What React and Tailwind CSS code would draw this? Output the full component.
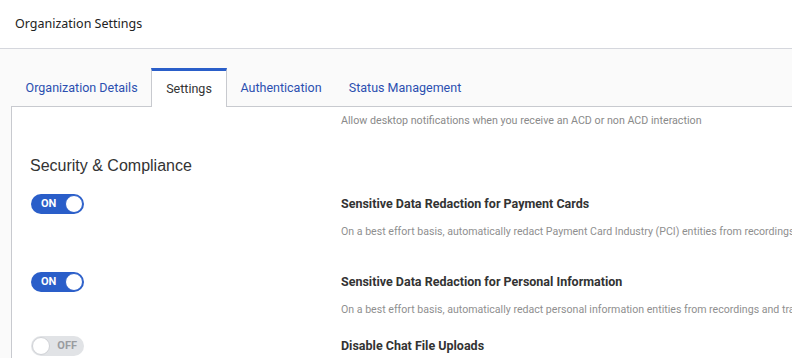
import React from 'react'

const tabs = [
  { name: 'Organization Details', active: false },
  { name: 'Settings', active: true },
  { name: 'Authentication', active: false },
  { name: 'Status Management', active: false },
]

function Toggle({ on }) {
  if (on) {
    return (
      <div className="flex h-[20px] w-[53px] items-center justify-between rounded-full bg-[#2a5ec9] pl-[10px] pr-[1px]">
        <span className="text-[11px] font-bold text-white">ON</span>
        <span className="h-[18px] w-[18px] rounded-full border border-[#2a5ec9] bg-white" />
      </div>
    )
  }
  return (
    <div className="flex h-[20px] w-[53px] items-center justify-between rounded-full bg-[#e1e3e6] pl-[1px] pr-[7px]">
      <span className="h-[18px] w-[18px] rounded-full border border-[#d0d2d6] bg-white" />
      <span className="text-[11px] font-bold text-[#9a9ca0]">OFF</span>
    </div>
  )
}

const rows = [
  {
    on: true,
    label: 'Sensitive Data Redaction for Payment Cards',
    desc: 'On a best effort basis, automatically redact Payment Card Industry (PCI) entities from recordings and transcripts',
    pad: 'h-[78px]',
  },
  {
    on: true,
    label: 'Sensitive Data Redaction for Personal Information',
    desc: 'On a best effort basis, automatically redact personal information entities from recordings and transcripts',
    pad: 'h-[64px]',
  },
  {
    on: false,
    label: 'Disable Chat File Uploads',
    desc: '',
    pad: 'h-[64px]',
  },
]

export default function App() {
  return (
    <div className="h-[358px] w-[792px] overflow-hidden bg-[#fafafa] font-['Roboto',sans-serif]">
      {/* header */}
      <div className="flex h-[49px] items-center border-b border-[#d5d7dd] bg-white pl-[15px]">
        <span className="font-['Noto_Sans',sans-serif] text-[12.5px] text-[#222]">Organization Settings</span>
      </div>

      {/* tabs */}
      <div className="mt-[19px] flex pl-[11px]">
        <div className="flex h-[39px] flex-1 items-end border-b border-[#c8cacf] pl-[1px]">
          {tabs.map((t) => (
            <div
              key={t.name}
              className={
                t.active
                  ? 'relative -mb-px flex h-[39px] items-center border-x border-t-[3px] border-x-[#c8cacf] border-t-[#2a5ec9] bg-white px-[14px] pt-[1px] text-[12.5px] text-[#333]'
                  : 'flex h-[38px] items-center px-[13.6px] pt-[2px] text-[12.5px] text-[#2b4fb0]'
              }
            >
              {t.name}
            </div>
          ))}
        </div>
      </div>

      {/* content panel */}
      <div className="ml-[11px] h-full border-l border-[#c8cacf] bg-white pt-[1px]">
        <div className="flex h-[26px] items-center pl-[329px] text-[10.7px] text-[#8a8a8a]">
          Allow desktop notifications when you receive an ACD or non ACD interaction
        </div>
        <div className="mt-[19px] pl-[18px] font-['Liberation_Sans',sans-serif] text-[16px] leading-[26px] text-[#333]">
          Security &amp; Compliance
        </div>
        <div className="mt-[15px] flex flex-col">
          {rows.map((r) => (
            <div key={r.label} className={`flex pl-[19px] ${r.pad}`}>
              <div className="w-[310px] shrink-0">
                <Toggle on={r.on} />
              </div>
              <div className="flex flex-col whitespace-nowrap">
                <div className="text-[12.5px] leading-[20px] font-bold text-[#333]">{r.label}</div>
                {r.desc && <div className="mt-[8px] text-[10.6px] leading-[20px] text-[#8f8f8f]">{r.desc}</div>}
              </div>
            </div>
          ))}
        </div>
      </div>
    </div>
  )
}
